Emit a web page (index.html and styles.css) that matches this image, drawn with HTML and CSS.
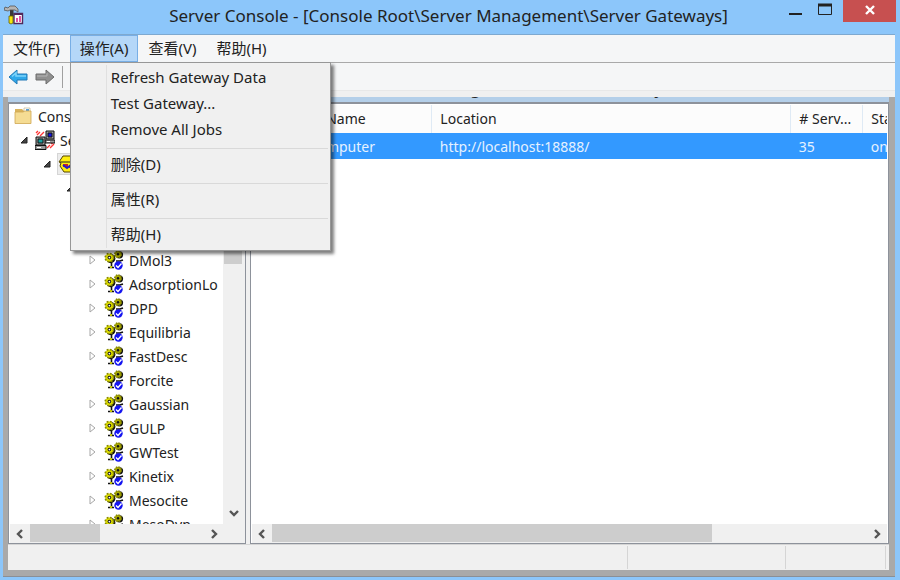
FILE: index.html
```html
<!DOCTYPE html>
<html lang="zh-CN">

<head>
    <meta charset="UTF-8">
    <meta name="viewport" content="width=device-width, initial-scale=1.0">
    <title>Server Console</title>
    <link rel="stylesheet" href="styles.css">
</head>

<body>
    <svg class="sprite" aria-hidden="true">
        <symbol id="gears" viewBox="0 0 20 20">
            <circle cx="15.500" cy="4.800" r="3.600" fill="#111"/>
            <circle cx="14" cy="4.200" r="3.200" fill="#a8a800" stroke="#8a8a00" stroke-width="1.600" stroke-dasharray="1.500 1"/>
            <circle cx="14" cy="4.200" r="1.200" fill="#111"/>
            <circle cx="6.800" cy="8.600" r="4.600" fill="#111"/>
            <circle cx="5.400" cy="7.600" r="4.200" fill="#dada00" stroke="#8a8a00" stroke-width="1.600" stroke-dasharray="1.800 1.500"/>
            <circle cx="5.400" cy="7.600" r="1.800" fill="#111"/>
            <circle cx="5.400" cy="7.600" r=".9" fill="#fff"/>
            <path d="M7.500 13v4M4 17.500h6M12 11h4l3-1" stroke="#111" stroke-width="1.600" fill="none"/>
            <path d="M6 17h2" stroke="#c8c800" stroke-width="2"/>
            <circle cx="14.500" cy="15.500" r="4.200" fill="#1414f0"/>
            <path d="M12 15.500l2 2 3.500-4" stroke="#fff" stroke-width="1.400" fill="none"/>
        </symbol>
        <symbol id="folder" viewBox="0 0 18 18">
            <path d="M1 2h7l2 2h6v12H1z" fill="#d9b35c"/>
            <path d="M10 1h6v4h-6z" fill="#fff" stroke="#b9a77a" stroke-width=".6"/>
            <path d="M12 2h3v2h-3z" fill="#5aa0d8"/>
            <path d="M1 5h8l2-1h6v12.500H1z" fill="#f5dc93" stroke="#cfa651" stroke-width=".8"/>
        </symbol>
        <symbol id="network" viewBox="0 0 20 20">
            <path d="M2 5l3-3M5 6l4-4M1 3l2-2M12 18l3-3M15 18l4-4M16 14l3-2" stroke="#f33" stroke-width="1.300"/>
            <path d="M11 1h8v8h-8zM10 10h10v3H10z" fill="#999" stroke="#111"/>
            <path d="M13 3h4v4h-4z" fill="#1414e0" stroke="#111"/>
            <path d="M1 7h9v8H1zM0 15.500h11v4H0z" fill="#999" stroke="#111"/>
            <path d="M3 9h5v4H3z" fill="#18a0a0" stroke="#111"/>
            <path d="M2 17.500h4M12 11.500h3" stroke="#fff"/>
        </symbol>
        <symbol id="gateway" viewBox="0 0 20 20">
            <path d="M5 2h9l5 7-5 9H6L2 12l1-3-2-1z" fill="#ffee10" stroke="#554400"/>
            <path d="M2 8h16" stroke="#222"/>
            <path d="M5 10h5v3H5zM11 11h5v3h-5z" fill="#c22"/>
            <path d="M5 11l4 3 4-3 2 3" stroke="#22c" stroke-width="2" fill="none"/>
        </symbol>
        <symbol id="open" viewBox="0 0 8 8">
            <path d="M7 1v6H1z" fill="#444" stroke="#222"/>
        </symbol>
        <symbol id="closed" viewBox="0 0 8 10">
            <path d="M1 1l5 4-5 4z" fill="#fff" stroke="#a6a6a6"/>
        </symbol>
        <symbol id="chevron" viewBox="0 0 10 10">
            <path d="M7 1L3 5l4 4" fill="none" stroke="#555" stroke-width="2.400"/>
        </symbol>
    </svg>

    <header class="titlebar">
        <svg class="app-icon" viewBox="0 0 20 20" aria-hidden="true">
            <path d="M10 8.500h8.500v10H10z" fill="#fff" stroke="#50285a" stroke-width="1.400"/>
            <path d="M10 9h8.500" stroke="#50285a" stroke-width="2"/>
            <path d="M13 17v-4M16 17v-6" stroke="#e0409a" stroke-width="1.800"/>
            <path d="M6 5h3.500v6H6z" fill="#3a3a3a"/>
            <path d="M1 2l3 1 2-2h5l3 3v3l-3-2H6L4 6 0 5z" fill="#b5b5b5" stroke="#555" stroke-width=".8"/>
            <path d="M5 11h4v7l-2 1-2-1z" fill="#f4e810" stroke="#665c00" stroke-width=".8"/>
        </svg>
        <h1 class="title">Server Console - [Console Root\Server Management\Server Gateways]</h1>
        <div class="window-buttons">
            <button class="win-button" aria-label="Minimize">
                <svg width="16" height="16"><path d="M2 14h13" stroke="#222" stroke-width="2"/></svg>
            </button>
            <button class="win-button" aria-label="Maximize">
                <svg width="16" height="16"><path d="M1.500 4.500h13v10h-13z" fill="none" stroke="#222"/><path d="M1 5h14" stroke="#222" stroke-width="3"/></svg>
            </button>
            <button class="win-button close" aria-label="Close">
                <svg width="12" height="12"><path d="M2 1l8 8M10 1l-8 8" stroke="#fff" stroke-width="2.400"/></svg>
            </button>
        </div>
    </header>

    <main class="window">
        <nav class="menubar">
            <button class="menu-button">文件(F)</button>
            <div class="menu-holder">
                <button class="menu-button active">操作(A)</button>
                <div class="menu">
                    <div class="menu-group">
                        <button class="menu-item">Refresh Gateway Data</button>
                        <button class="menu-item">Test Gateway...</button>
                        <button class="menu-item">Remove All Jobs</button>
                    </div>
                    <div class="menu-group">
                        <button class="menu-item">删除(D)</button>
                    </div>
                    <div class="menu-group">
                        <button class="menu-item">属性(R)</button>
                    </div>
                    <div class="menu-group">
                        <button class="menu-item">帮助(H)</button>
                    </div>
                </div>
            </div>
            <button class="menu-button">查看(V)</button>
            <button class="menu-button">帮助(H)</button>
        </nav>

        <div class="toolbar">
            <button class="tool-button" aria-label="Back">
                <svg viewBox="0 0 20 18"><path d="M1 9l8-7v4h10v6H9v4z" fill="#2fa8ea" stroke="#2379b5"/><path d="M4 8.500l4-3.500v3h10" fill="none" stroke="#7fd4fa" stroke-width="1.500"/></svg>
            </button>
            <button class="tool-button" aria-label="Forward">
                <svg viewBox="0 0 20 18"><path d="M19 9l-8-7v4H1v6h10v4z" fill="#909090" stroke="#6d6d6d"/><path d="M2 8h10V5" fill="none" stroke="#b5b5b5"/></svg>
            </button>
        </div>

        <div class="child-window">
            <div class="child-caption"><span>Console Root\Server Management\Server Gateways</span></div>

            <div class="panes">
                <section class="pane tree-pane">
                    <ul class="tree">
                        <li class="row root"><svg class="folder"><use href="#folder"/></svg>Console Root</li>
                        <li class="row level-1"><svg class="arrow"><use href="#open"/></svg><svg class="icon"><use href="#network"/></svg>Server Management</li>
                        <li class="row level-2"><svg class="arrow"><use href="#open"/></svg><svg class="icon selected"><use href="#gateway"/></svg>Server Gateways</li>
                        <li class="row level-3"><svg class="arrow"><use href="#open"/></svg><svg class="icon"><use href="#network"/></svg>my computer</li>
                        <li class="row level-4"><svg class="arrow"><use href="#closed"/></svg><svg class="icon"><use href="#gears"/></svg>Amorphous</li>
                        <li class="row level-4"><svg class="arrow"><use href="#closed"/></svg><svg class="icon"><use href="#gears"/></svg>CASTEP</li>
                        <li class="row level-4"><svg class="arrow"><use href="#closed"/></svg><svg class="icon"><use href="#gears"/></svg>DMol3</li>
                        <li class="row level-4"><svg class="arrow"><use href="#closed"/></svg><svg class="icon"><use href="#gears"/></svg>AdsorptionLo</li>
                        <li class="row level-4"><svg class="arrow"><use href="#closed"/></svg><svg class="icon"><use href="#gears"/></svg>DPD</li>
                        <li class="row level-4"><svg class="arrow"><use href="#closed"/></svg><svg class="icon"><use href="#gears"/></svg>Equilibria</li>
                        <li class="row level-4"><svg class="arrow"><use href="#closed"/></svg><svg class="icon"><use href="#gears"/></svg>FastDesc</li>
                        <li class="row level-4"><svg class="arrow"></svg><svg class="icon"><use href="#gears"/></svg>Forcite</li>
                        <li class="row level-4"><svg class="arrow"><use href="#closed"/></svg><svg class="icon"><use href="#gears"/></svg>Gaussian</li>
                        <li class="row level-4"><svg class="arrow"><use href="#closed"/></svg><svg class="icon"><use href="#gears"/></svg>GULP</li>
                        <li class="row level-4"><svg class="arrow"><use href="#closed"/></svg><svg class="icon"><use href="#gears"/></svg>GWTest</li>
                        <li class="row level-4"><svg class="arrow"><use href="#closed"/></svg><svg class="icon"><use href="#gears"/></svg>Kinetix</li>
                        <li class="row level-4"><svg class="arrow"><use href="#closed"/></svg><svg class="icon"><use href="#gears"/></svg>Mesocite</li>
                        <li class="row level-4"><svg class="arrow"><use href="#closed"/></svg><svg class="icon"><use href="#gears"/></svg>MesoDyn</li>
                    </ul>
                    <div class="scrollbar vertical">
                        <button class="scroll-button up" aria-label="Scroll up"><svg><use href="#chevron"/></svg></button>
                        <div class="track"><div class="thumb"></div></div>
                        <button class="scroll-button down" aria-label="Scroll down"><svg><use href="#chevron"/></svg></button>
                    </div>
                    <div class="scrollbar horizontal">
                        <button class="scroll-button" aria-label="Scroll left"><svg><use href="#chevron"/></svg></button>
                        <div class="track"><div class="thumb"></div></div>
                        <button class="scroll-button right" aria-label="Scroll right"><svg><use href="#chevron"/></svg></button>
                    </div>
                </section>

                <section class="pane list-pane">
                    <div class="list">
                        <table>
                            <colgroup>
                                <col class="col-name">
                                <col class="col-location">
                                <col class="col-servers">
                                <col class="col-status">
                            </colgroup>
                            <thead>
                                <tr>
                                    <th class="name-head">Gateway Name</th>
                                    <th>Location</th>
                                    <th># Serv...</th>
                                    <th>Status</th>
                                </tr>
                            </thead>
                            <tbody>
                                <tr>
                                    <td><div class="name-cell"><svg class="icon"><use href="#network"/></svg>my computer</div></td>
                                    <td>http://localhost:18888/</td>
                                    <td>35</td>
                                    <td>online</td>
                                </tr>
                            </tbody>
                        </table>
                    </div>
                    <div class="scrollbar horizontal">
                        <button class="scroll-button" aria-label="Scroll left"><svg><use href="#chevron"/></svg></button>
                        <div class="track"><div class="thumb"></div></div>
                        <button class="scroll-button right" aria-label="Scroll right"><svg><use href="#chevron"/></svg></button>
                    </div>
                </section>
            </div>

            <footer class="statusbar">
                <div class="status-main"></div>
                <div class="status-progress"></div>
                <div class="status-end"></div>
            </footer>
        </div>
    </main>
</body>

</html>
```

FILE: styles.css
```css
* {
    box-sizing: border-box;
}

body {
    font-family: "Noto Sans", "Noto Sans CJK SC", sans-serif;
    font-size: 14px;
    background-color: #8cc6fa;
    color: #222;
    margin: 0;
    height: 100vh;
    display: flex;
    flex-direction: column;
    overflow: hidden;
}

button {
    font: inherit;
    color: inherit;
    background: none;
    border: none;
    margin: 0;
    padding: 0;
}

svg {
    display: block;
    flex: none;
}

.sprite {
    position: absolute;
    width: 0;
    height: 0;
}

/* Title bar */
.titlebar {
    display: flex;
    height: 34px;
    padding: 0 4px;
    flex: none;
}

.app-icon {
    width: 20px;
    height: 20px;
    margin-top: 5px;
}

.title {
    flex: 1;
    margin: 0;
    padding-left: 86px;
    font-size: 17px;
    font-weight: normal;
    line-height: 32px;
    text-align: center;
    white-space: nowrap;
}

.window-buttons {
    display: flex;
    gap: 14px;
    align-items: flex-start;
}

.win-button {
    height: 22px;
    display: flex;
}

.win-button.close {
    width: 53px;
    margin-left: -4px;
    align-items: center;
    justify-content: center;
    background-color: #c75050;
}

.window {
    flex: 1;
    min-height: 0;
    display: flex;
    flex-direction: column;
    margin: 0 5px 3px 3px;
    background-color: #f0f0f0;
}

/* Menu bar */
.menubar {
    display: flex;
    height: 29px;
    flex: none;
    background-color: #f5f6f7;
    border-top: 1px solid #7ea9d0;
    border-bottom: 1px solid #a9a9a9;
    font-size: 15px;
}

.menu-holder {
    position: relative;
    display: flex;
}

.menu-button {
    padding: 0 10px 3px;
}

.menu-button.active {
    background-color: #b5d7f8;
    box-shadow: inset 0 0 0 1px #78aee5;
}

.menu {
    position: absolute;
    top: 27px;
    left: 0;
    z-index: 1;
    width: 261px;
    padding: 2px;
    background-color: #f0f0f0;
    border: 1px solid #979797;
    box-shadow: 3px 3px 3px rgba(0, 0, 0, 0.5);
}

.menu-group {
    margin-left: 33px;
    border-left: 1px solid #e0e0e0;
}

.menu-group + .menu-group {
    padding-top: 9px;
    background: linear-gradient(#d9d9d9, #d9d9d9) 0 5px / 100% 1px no-repeat;
}

.menu-item {
    display: block;
    width: 100%;
    height: 26px;
    padding: 0 0 3px 4px;
    text-align: left;
}

/* Toolbar */
.toolbar {
    display: flex;
    align-items: center;
    gap: 7px;
    height: 28px;
    padding-left: 5px;
    flex: none;
    background-color: #f5f6f7;
    border-bottom: 1px solid #e8e8e8;
}

.tool-button svg {
    width: 20px;
    height: 18px;
}

.toolbar::after {
    content: '';
    width: 1px;
    height: 22px;
    background-color: #a0a0a0;
}

/* Child window */
.child-window {
    flex: 1;
    min-height: 0;
    margin-top: 6px;
    padding: 0 6px 6px 5px;
    display: flex;
    flex-direction: column;
    background-color: #a9a9a9;
    border-bottom: 1px solid #8a8f96;
}

.child-caption {
    height: 5px;
    flex: none;
    display: flex;
    align-items: flex-end;
    justify-content: center;
    overflow: hidden;
    background-color: #b4cfe9;
    font-size: 17px;
    line-height: 28px;
    padding-left: 32px;
}

.panes {
    flex: 1;
    min-height: 0;
    display: flex;
    gap: 4px;
    background-color: #f0f0f0;
}

.pane {
    display: grid;
    grid-template-rows: 1fr 19px;
    min-width: 0;
    padding: 1px 1px 0;
    border: 1px solid #8d929b;
    border-top-width: 2px;
    background-color: #fff;
}

.tree-pane {
    width: 27%;
    grid-template-columns: 1fr 20px;
    background: linear-gradient(#f0f0f0, #f0f0f0) right / 22px 100% no-repeat #fff;
}

.list-pane {
    flex: 1;
    grid-template-columns: 1fr;
}

/* Tree */
.tree {
    list-style: none;
    margin: 0;
    padding: 0;
    min-width: 0;
    min-height: 0;
    overflow: hidden;
}

.row {
    display: flex;
    align-items: center;
    height: 24px;
    padding-bottom: 2px;
    white-space: nowrap;
}

.folder {
    width: 18px;
    height: 18px;
    margin-right: 6px;
}

.arrow {
    width: 8px;
    height: 10px;
    margin-right: 7px;
}

.icon {
    width: 20px;
    height: 20px;
    margin-right: 5px;
}

.icon.selected {
    background-color: #ececec;
    outline: 1px solid #d5d5d5;
}

.root {
    padding-left: 4px;
}

.level-1 {
    padding-left: 10px;
}

.level-2 {
    padding-left: 33px;
}

.level-3 {
    padding-left: 56px;
}

.level-4 {
    padding-left: 79px;
}

/* Scrollbars */
.scrollbar {
    display: flex;
    min-width: 0;
    min-height: 0;
    background-color: #f0f0f0;
}

.scroll-button {
    display: flex;
    align-items: center;
    justify-content: center;
    width: 20px;
    height: 19px;
}

.scroll-button svg {
    width: 10px;
    height: 10px;
}

.track {
    flex: 1;
}

.thumb {
    background-color: #cdcdcd;
}

.vertical {
    flex-direction: column;
    padding-bottom: 2px;
}

.vertical .thumb {
    width: 18px;
    height: 37%;
}

.horizontal .thumb {
    height: 18px;
    width: 40%;
}

.list-pane .thumb {
    width: 74%;
}

.right svg {
    transform: rotate(180deg);
}

.up svg {
    transform: rotate(90deg);
}

.down svg {
    transform: rotate(-90deg);
}

/* Gateway list */
.list {
    min-width: 0;
    min-height: 0;
    overflow: hidden;
}

table {
    table-layout: fixed;
    width: 110%;
    border-collapse: collapse;
    white-space: nowrap;
}

.col-name {
    width: 180px;
}

.col-location {
    width: 359px;
}

.col-servers {
    width: 72px;
}

th,
td {
    padding: 0 8px;
    text-align: left;
    font-weight: normal;
}

th {
    height: 28px;
    padding-bottom: 2px;
    background-color: #fcfcfc;
    border-right: 1px solid #dfeaf5;
}

.name-head {
    padding-left: 14px;
}

td {
    height: 26px;
    background-color: #3399ff;
    color: #e6f2ff;
}

.name-cell {
    display: flex;
    align-items: center;
    padding-left: 2px;
}

/* Status bar */
.statusbar {
    display: flex;
    height: 26px;
    padding: 1px 3px 1px 0;
    flex: none;
    background-color: #f0f0f0;
    border-top: 1px solid #d5d5d5;
}

.statusbar div {
    border-right: 1px solid #d5d5d5;
}

.status-main {
    flex: 1;
}

.status-progress {
    width: 18%;
}

.status-end {
    width: 100px;
}
```
